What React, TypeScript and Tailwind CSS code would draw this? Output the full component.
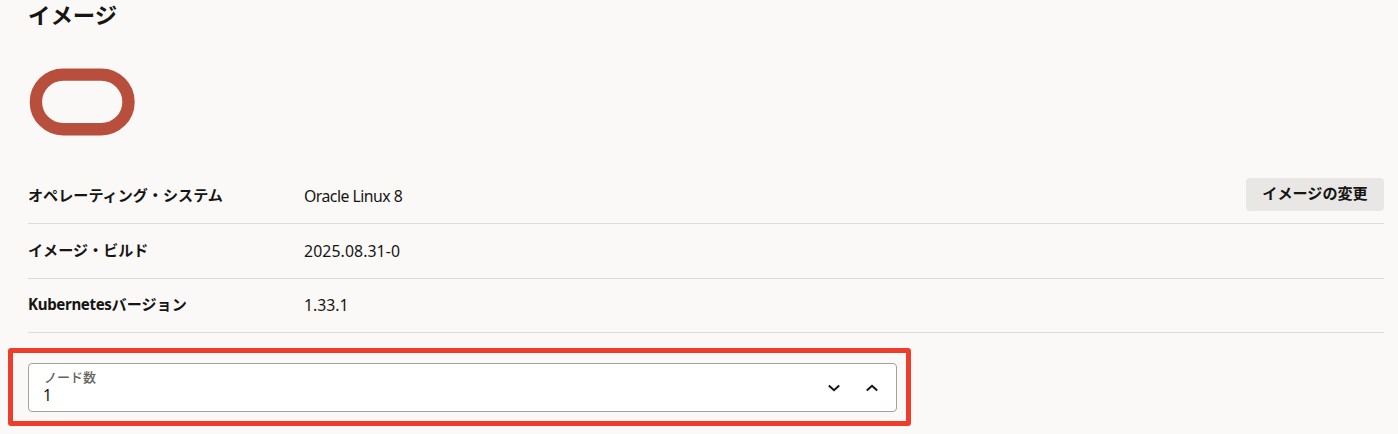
import React from "react";

const latin = "font-['Noto_Sans','Noto_Sans_CJK_JP',sans-serif]";

type RowProps = {
  label: React.ReactNode;
  value: string;
  valueClass?: string;
  action?: React.ReactNode;
  className: string;
};

function Row({ label, value, valueClass = "", action, className }: RowProps) {
  return (
    <div className={`flex items-center border-b border-[#dddcda] ${className}`}>
      <dt className="w-[276px] shrink-0 pb-[3px] text-[15.1px] leading-5 font-bold whitespace-nowrap">{label}</dt>
      <dd className={`grow pb-px text-[15.8px] leading-5 whitespace-nowrap ${valueClass}`}>{value}</dd>
      {action}
    </div>
  );
}

function Chevron({ up = false }: { up?: boolean }) {
  return (
    <svg width="12" height="8" viewBox="0 0 12 8" fill="none" stroke="#161513" strokeWidth="2">
      <path d={up ? "M.8 6.5 6 1.8l5.2 4.7" : "M.8 1.5 6 6.2l5.2-4.7"} />
    </svg>
  );
}

export default function App() {
  return (
    <main className={`h-[434px] w-[1398px] overflow-hidden bg-[#fbf9f8] text-[#161513] ${latin}`}>
      <section className="pr-[14px] pl-7">
        <h2 className="h-[68px] text-[22.4px] leading-[31px] font-bold">イメージ</h2>
        <svg className="ml-px block" width="107" height="68" viewBox="0 0 107 68" fill="none">
          <rect x="6.9" y="6.6" width="92.6" height="54.6" rx="27.3" stroke="#b84f3c" strokeWidth="12.4" />
        </svg>
        <dl className="mt-[33px]">
          <Row
            className="h-[55px]"
            label="オペレーティング・システム"
            value="Oracle Linux 8"
            valueClass="tracking-[-0.52px]"
            action={
              <button className="mb-[4px] h-[33px] w-[138px] rounded-[4px] bg-[#e8e7e5] pb-[2px] text-[15.1px] leading-5 font-bold">
                イメージの変更
              </button>
            }
          />
          <Row className="h-[55px]" label="イメージ・ビルド" value="2025.08.31-0" valueClass="tracking-[0.1px]" />
          <Row
            className="h-[54px]"
            label={<><span className="tracking-[-0.35px]">Kubernetes</span>バージョン</>}
            value="1.33.1"
          />
        </dl>
      </section>
      <div className="mt-[15px] ml-2 h-[78px] w-[903px] rounded-[3px] border-[5px] border-[#ee3d2a] pt-[10px] pl-[15px]">
        <div className="flex h-[49px] w-[869px] items-center rounded-[4px] border border-[#a3a19e] bg-white pr-[18px] pl-[15px]">
          <label className="flex grow flex-col pb-[2px]">
            <span className="text-[13px] leading-[18px] font-medium text-[#65625e]">ノード数</span>
            <span className="-ml-px text-[15.5px] leading-[19px]">1</span>
          </label>
          <div className="flex gap-[26px]">
            <button aria-label="減らす"><Chevron /></button>
            <button aria-label="増やす"><Chevron up /></button>
          </div>
        </div>
      </div>
    </main>
  );
}
